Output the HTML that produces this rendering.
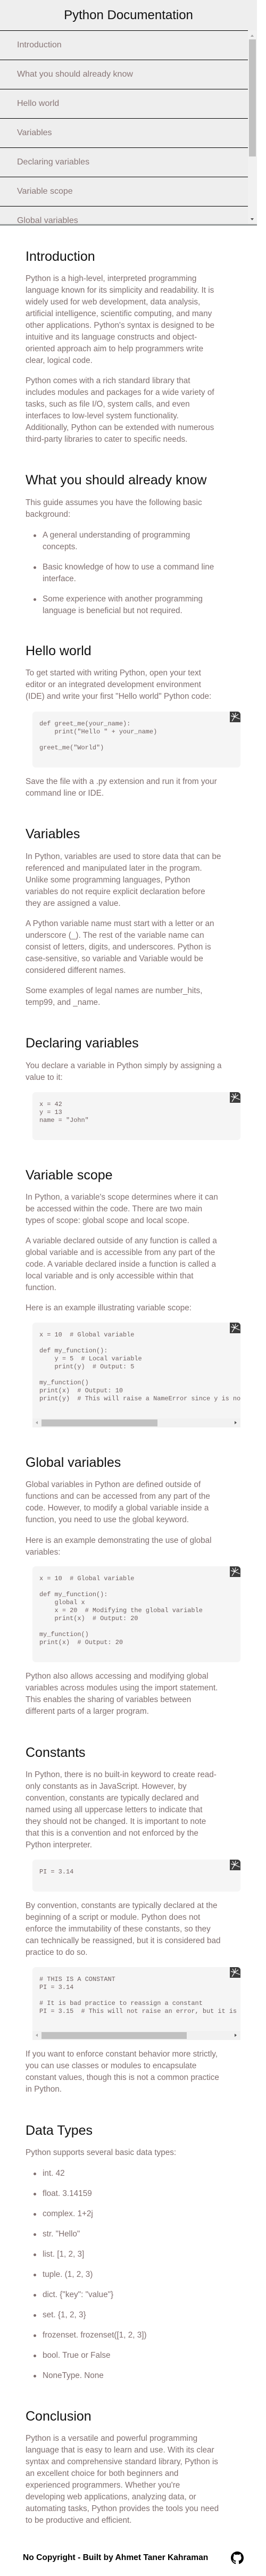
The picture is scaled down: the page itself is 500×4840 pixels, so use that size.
<!DOCTYPE html>
<html><head><meta charset="utf-8">
<style>
*{margin:0;padding:0;box-sizing:border-box}
html,body{width:500px;height:4840px;background:#fff;overflow:hidden}
body{position:relative;font-family:"Liberation Sans",Arial,sans-serif}
#nav{position:absolute;left:0;top:0;width:483px;height:424px;background:#eee;overflow:hidden}
#nav .title{position:absolute;left:0;width:483px;top:14px;text-align:center;font-size:24px;color:#111;line-height:30px}
#nav .item{position:absolute;left:0;width:466px;height:55px;border-top:1px solid #000;font-size:16px;color:#8a7878;padding-left:32px;line-height:54px}
#nav .bar{position:absolute;left:0;top:421px;width:483px;height:3px;background:#9a9e9e}
#nav .sb{position:absolute;left:466px;top:57px;width:17px;height:364px;background:#f1f1f1}
#nav .thumb{position:absolute;left:2px;top:17px;width:13px;height:220px;background:#c1c1c1}
.h{position:absolute;left:48px;font-size:25px;line-height:28px;color:#111;white-space:nowrap}
.p{position:absolute;left:48px;font-size:15.3px;line-height:22px;color:#807070;white-space:nowrap}
.li{position:absolute;left:80px;font-size:15.3px;line-height:22px;color:#807070;white-space:nowrap}
.li:before{content:"";position:absolute;left:-17px;top:9px;width:5px;height:5px;border-radius:50%;background:#807070}
.code{position:absolute;left:61px;width:391px;background:#f5f5f5;border-radius:6px;overflow:hidden}
.code pre{position:absolute;left:13px;font-family:"Liberation Mono",monospace;font-size:11.9px;line-height:15px;color:#6e6060;white-space:pre}
.ic{position:absolute;right:0;top:0;width:20px;height:20px;background:#3c3c3c}
.hs{position:absolute;left:0;bottom:0;width:391px;height:17px;background:#f1f1f1}
.hs .t{position:absolute;top:2px;height:13px;background:#c1c1c1}
.hs .la{position:absolute;left:6px;top:5px;width:0;height:0;border-top:3.5px solid transparent;border-bottom:3.5px solid transparent;border-right:4px solid #a3a3a3}
.hs .ra{position:absolute;right:7px;top:5px;width:0;height:0;border-top:3.5px solid transparent;border-bottom:3.5px solid transparent;border-left:4px solid #505050}
.foot{position:absolute;left:43px;top:4795px;font-size:15.6px;font-weight:bold;color:#000;line-height:22px;white-space:nowrap}
</style></head><body>

<div id="nav">
  <div class="title">Python Documentation</div>
  <div class="item" style="top:57px">Introduction</div>
  <div class="item" style="top:112px">What you should already know</div>
  <div class="item" style="top:167px">Hello world</div>
  <div class="item" style="top:222px">Variables</div>
  <div class="item" style="top:277px">Declaring variables</div>
  <div class="item" style="top:332px">Variable scope</div>
  <div class="item" style="top:387px">Global variables</div>
  <div class="sb">
    <div style="position:absolute;left:5px;top:8px;border-left:3.5px solid transparent;border-right:3.5px solid transparent;border-bottom:4px solid #a3a3a3"></div>
    <div class="thumb"></div>
    <div style="position:absolute;left:5px;top:353px;border-left:3.5px solid transparent;border-right:3.5px solid transparent;border-top:4px solid #505050"></div>
  </div>
  <div class="bar"></div>
</div>

<div class="h" style="top:468px">Introduction</div>
<div class="p" style="top:513px">Python is a high-level, interpreted programming<br>language known for its simplicity and readability. It is<br>widely used for web development, data analysis,<br>artificial intelligence, scientific computing, and many<br>other applications. Python's syntax is designed to be<br>intuitive and its language constructs and object-<br>oriented approach aim to help programmers write<br>clear, logical code.</div>
<div class="p" style="top:705px">Python comes with a rich standard library that<br>includes modules and packages for a wide variety of<br>tasks, such as file I/O, system calls, and even<br>interfaces to low-level system functionality.<br>Additionally, Python can be extended with numerous<br>third-party libraries to cater to specific needs.</div>

<div class="h" style="top:888px">What you should already know</div>
<div class="p" style="top:934px">This guide assumes you have the following basic<br>background:</div>
<div class="li" style="top:995px">A general understanding of programming<br>concepts.</div>
<div class="li" style="top:1055px">Basic knowledge of how to use a command line<br>interface.</div>
<div class="li" style="top:1115px">Some experience with another programming<br>language is beneficial but not required.</div>

<div class="h" style="top:1209px">Hello world</div>
<div class="p" style="top:1254px">To get started with writing Python, open your text<br>editor or an integrated development environment<br>(IDE) and write your first "Hello world" Python code:</div>
<div class="code" style="top:1337px;height:105px"><pre style="top:15.5px">def greet_me(your_name):
    print("Hello " + your_name)

greet_me("World")</pre><svg class="ic" viewBox="0 0 20 20"><rect width="20" height="20" fill="#3c3c3c"/><path d="M9 10L5 3M9 10L11 2M9 10L16 5M9 10L4 18M9 10L2 8M9 10L19 14" stroke="#fff" stroke-width="1.2"/></svg></div>
<div class="p" style="top:1458px">Save the file with a .py extension and run it from your<br>command line or IDE.</div>

<div class="h" style="top:1553px">Variables</div>
<div class="p" style="top:1599px">In Python, variables are used to store data that can be<br>referenced and manipulated later in the program.<br>Unlike some programming languages, Python<br>variables do not require explicit declaration before<br>they are assigned a value.</div>
<div class="p" style="top:1725px">A Python variable name must start with a letter or an<br>underscore (_). The rest of the variable name can<br>consist of letters, digits, and underscores. Python is<br>case-sensitive, so variable and Variable would be<br>considered different names.</div>
<div class="p" style="top:1851px">Some examples of legal names are number_hits,<br>temp99, and _name.</div>

<div class="h" style="top:1946px">Declaring variables</div>
<div class="p" style="top:1992px">You declare a variable in Python simply by assigning a<br>value to it:</div>
<div class="code" style="top:2052px;height:90px"><pre style="top:15.5px">x = 42
y = 13
name = "John"</pre><svg class="ic" viewBox="0 0 20 20"><rect width="20" height="20" fill="#3c3c3c"/><path d="M9 10L5 3M9 10L11 2M9 10L16 5M9 10L4 18M9 10L2 8M9 10L19 14" stroke="#fff" stroke-width="1.2"/></svg></div>

<div class="h" style="top:2194px">Variable scope</div>
<div class="p" style="top:2239px">In Python, a variable's scope determines where it can<br>be accessed within the code. There are two main<br>types of scope: global scope and local scope.</div>
<div class="p" style="top:2321px">A variable declared outside of any function is called a<br>global variable and is accessible from any part of the<br>code. A variable declared inside a function is called a<br>local variable and is only accessible within that<br>function.</div>
<div class="p" style="top:2447px">Here is an example illustrating variable scope:</div>
<div class="code" style="top:2485px;height:197px;border-radius:6px 6px 0 0"><pre style="top:15.5px">x = 10  # Global variable

def my_function():
    y = 5  # Local variable
    print(y)  # Output: 5

my_function()
print(x)  # Output: 10
print(y)  # This will raise a NameError since y is not defined globally</pre><svg class="ic" viewBox="0 0 20 20"><rect width="20" height="20" fill="#3c3c3c"/><path d="M9 10L5 3M9 10L11 2M9 10L16 5M9 10L4 18M9 10L2 8M9 10L19 14" stroke="#fff" stroke-width="1.2"/></svg><div class="hs"><div class="la"></div><div class="t" style="left:17px;width:218px"></div><div class="ra"></div></div></div>

<div class="h" style="top:2734px">Global variables</div>
<div class="p" style="top:2779px">Global variables in Python are defined outside of<br>functions and can be accessed from any part of the<br>code. However, to modify a global variable inside a<br>function, you need to use the global keyword.</div>
<div class="p" style="top:2884px">Here is an example demonstrating the use of global<br>variables:</div>
<div class="code" style="top:2943px;height:180px"><pre style="top:15.5px">x = 10  # Global variable

def my_function():
    global x
    x = 20  # Modifying the global variable
    print(x)  # Output: 20

my_function()
print(x)  # Output: 20</pre><svg class="ic" viewBox="0 0 20 20"><rect width="20" height="20" fill="#3c3c3c"/><path d="M9 10L5 3M9 10L11 2M9 10L16 5M9 10L4 18M9 10L2 8M9 10L19 14" stroke="#fff" stroke-width="1.2"/></svg></div>
<div class="p" style="top:3139px">Python also allows accessing and modifying global<br>variables across modules using the import statement.<br>This enables the sharing of variables between<br>different parts of a larger program.</div>

<div class="h" style="top:3279px">Constants</div>
<div class="p" style="top:3324px">In Python, there is no built-in keyword to create read-<br>only constants as in JavaScript. However, by<br>convention, constants are typically declared and<br>named using all uppercase letters to indicate that<br>they should not be changed. It is important to note<br>that this is a convention and not enforced by the<br>Python interpreter.</div>
<div class="code" style="top:3494px;height:60px"><pre style="top:15.5px">PI = 3.14</pre><svg class="ic" viewBox="0 0 20 20"><rect width="20" height="20" fill="#3c3c3c"/><path d="M9 10L5 3M9 10L11 2M9 10L16 5M9 10L4 18M9 10L2 8M9 10L19 14" stroke="#fff" stroke-width="1.2"/></svg></div>
<div class="p" style="top:3570px">By convention, constants are typically declared at the<br>beginning of a script or module. Python does not<br>enforce the immutability of these constants, so they<br>can technically be reassigned, but it is considered bad<br>practice to do so.</div>
<div class="code" style="top:3696px;height:137px;border-radius:6px 6px 0 0"><pre style="top:15.5px"># THIS IS A CONSTANT
PI = 3.14

# It is bad practice to reassign a constant
PI = 3.15  # This will not raise an error, but it is not recommended</pre><svg class="ic" viewBox="0 0 20 20"><rect width="20" height="20" fill="#3c3c3c"/><path d="M9 10L5 3M9 10L11 2M9 10L16 5M9 10L4 18M9 10L2 8M9 10L19 14" stroke="#fff" stroke-width="1.2"/></svg><div class="hs"><div class="la"></div><div class="t" style="left:17px;width:273px"></div><div class="ra"></div></div></div>
<div class="p" style="top:3849px">If you want to enforce constant behavior more strictly,<br>you can use classes or modules to encapsulate<br>constant values, though this is not a common practice<br>in Python.</div>

<div class="h" style="top:3989px">Data Types</div>
<div class="p" style="top:4034px">Python supports several basic data types:</div>
<div class="li" style="top:4073px">int. 42</div>
<div class="li" style="top:4111px">float. 3.14159</div>
<div class="li" style="top:4149px">complex. 1+2j</div>
<div class="li" style="top:4187px">str. "Hello"</div>
<div class="li" style="top:4225px">list. [1, 2, 3]</div>
<div class="li" style="top:4263px">tuple. (1, 2, 3)</div>
<div class="li" style="top:4301px">dict. {"key": "value"}</div>
<div class="li" style="top:4339px">set. {1, 2, 3}</div>
<div class="li" style="top:4377px">frozenset. frozenset([1, 2, 3])</div>
<div class="li" style="top:4415px">bool. True or False</div>
<div class="li" style="top:4453px">NoneType. None</div>

<div class="h" style="top:4526px">Conclusion</div>
<div class="p" style="top:4571px">Python is a versatile and powerful programming<br>language that is easy to learn and use. With its clear<br>syntax and comprehensive standard library, Python is<br>an excellent choice for both beginners and<br>experienced programmers. Whether you're<br>developing web applications, analyzing data, or<br>automating tasks, Python provides the tools you need<br>to be productive and efficient.</div>

<div class="foot">No Copyright - Built by Ahmet Taner Kahraman</div>
<svg style="position:absolute;left:434px;top:4794px" width="24" height="24" viewBox="0 0 16 16"><path fill="#000" d="M8 0C3.58 0 0 3.58 0 8c0 3.54 2.29 6.53 5.47 7.59.4.07.55-.17.55-.38 0-.19-.01-.82-.01-1.49-2.01.37-2.53-.49-2.69-.94-.09-.23-.48-.94-.82-1.13-.28-.15-.68-.52-.01-.53.63-.01 1.08.58 1.23.82.72 1.21 1.87.87 2.33.66.07-.52.28-.87.51-1.07-1.78-.2-3.64-.89-3.64-3.95 0-.87.31-1.59.82-2.15-.08-.2-.36-1.02.08-2.12 0 0 .67-.21 2.2.82.64-.18 1.32-.27 2-.27.68 0 1.36.09 2 .27 1.53-1.04 2.2-.82 2.2-.82.44 1.1.16 1.92.08 2.12.51.56.82 1.27.82 2.15 0 3.07-1.87 3.75-3.65 3.95.29.25.54.73.54 1.48 0 1.07-.01 1.93-.01 2.2 0 .21.15.46.55.38A8.013 8.013 0 0016 8c0-4.42-3.58-8-8-8z"/></svg>

</body></html>
